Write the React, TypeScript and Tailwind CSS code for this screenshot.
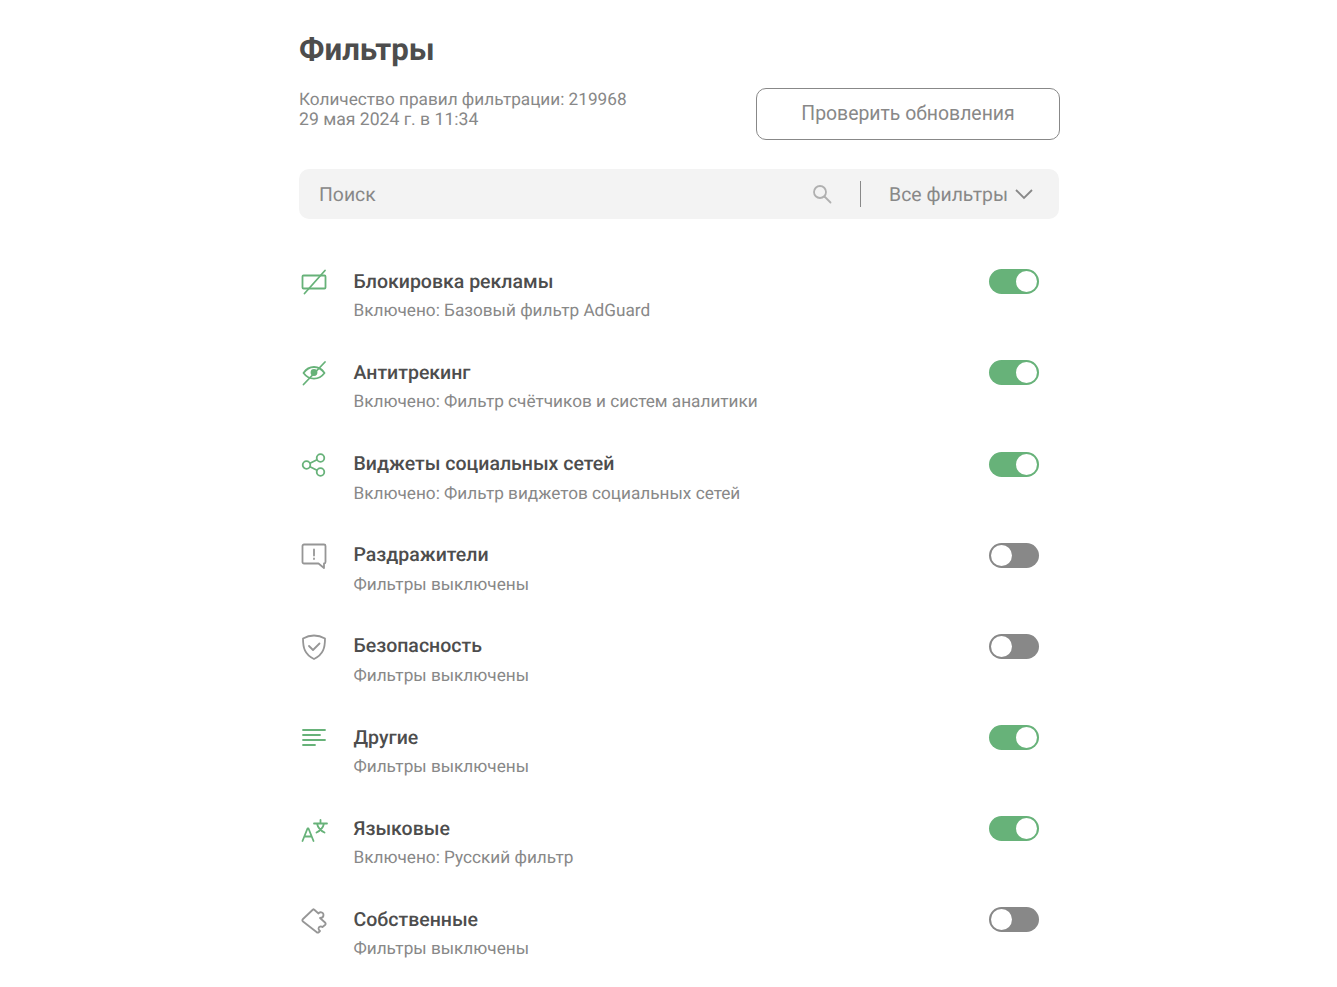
const GREEN = "#67b279";
const GRAY = "#969696";

function AdIcon({ color }: { color: string }) {
  return (
    <svg viewBox="0 0 28 28" fill="none" stroke={color} strokeWidth="1.800" strokeLinecap="round" strokeLinejoin="round" className="h-7 w-7">
      <rect x="2.500" y="7.500" width="23" height="13" rx="1" />
      <path d="M25 2.500 4.500 25.500" />
    </svg>
  );
}

function EyeIcon({ color }: { color: string }) {
  return (
    <svg viewBox="0 0 28 28" fill="none" stroke={color} strokeWidth="1.800" strokeLinecap="round" strokeLinejoin="round" className="h-7 w-7">
      <path d="M3.500 14c5.500-8 15.500-8 21 0-5.500 7.500-15.500 7.500-21 0Z" />
      <circle cx="14" cy="13.500" r="2.500" fill={color} />
      <path d="M25 3 3.500 25.500" />
    </svg>
  );
}

function ShareIcon({ color }: { color: string }) {
  return (
    <svg viewBox="0 0 28 28" fill="none" stroke={color} strokeWidth="1.800" className="h-7 w-7">
      <circle cx="6.500" cy="14" r="3.800" />
      <circle cx="20.500" cy="7" r="3.800" />
      <circle cx="20.500" cy="21" r="3.800" />
      <path d="M10 12.300 17 8.800M10 15.700l7 3.500" />
    </svg>
  );
}

function BubbleIcon({ color }: { color: string }) {
  return (
    <svg viewBox="0 0 28 28" fill="none" stroke={color} strokeWidth="1.800" strokeLinecap="round" strokeLinejoin="round" className="h-7 w-7">
      <path d="M4 2.500h20a1.500 1.500 0 0 1 1.500 1.500v16a1.500 1.500 0 0 1-1.500 1.500v4.500l-5.500-4.500H4A1.500 1.500 0 0 1 2.500 20V4A1.500 1.500 0 0 1 4 2.500Z" />
      <path d="M14 7.500v6M14 16.500v.5" />
    </svg>
  );
}

function ShieldIcon({ color }: { color: string }) {
  return (
    <svg viewBox="0 0 28 28" fill="none" stroke={color} strokeWidth="1.800" strokeLinecap="round" strokeLinejoin="round" className="h-7 w-7">
      <path d="M14 2.500c-3.500 0-7.500 1-11 3 0 9 1.500 16 11 20.500 9.500-4.500 11-11.500 11-20.500-3.500-2-7.500-3-11-3Z" />
      <path d="m9 13 4 4 6.500-6.500" />
    </svg>
  );
}

function LinesIcon({ color }: { color: string }) {
  return (
    <svg viewBox="0 0 28 28" fill="none" stroke={color} strokeWidth="1.800" strokeLinecap="round" className="h-7 w-7">
      <path d="M3 6h22M3 11h17M3 16h22M3 21h12" />
    </svg>
  );
}

function LangIcon({ color }: { color: string }) {
  return (
    <svg viewBox="0 0 28 28" fill="none" stroke={color} strokeWidth="1.800" strokeLinecap="round" strokeLinejoin="round" className="h-7 w-7">
      <path d="m2.500 26 5-12.500h1l5 12.500M4.500 21.500h7" />
      <path d="M14 8.500h13M20.500 5v3.500M17 8.500c.8 4 3.500 7 7.500 9M24 8.500c-.8 4-3.500 7-7.500 9" />
    </svg>
  );
}

function PuzzleIcon({ color }: { color: string }) {
  return (
    <svg viewBox="0 0 28 28" fill="none" stroke={color} strokeWidth="1.800" strokeLinejoin="round" className="h-7 w-7">
      <path d="M14 3.500 18.500 7.500c1-2 5-1.500 5 1.500 0 2-1.500 3-3.500 3l5 4.500c1 1 1 1.500 0 2.500l-2.500 2c-1.500-1-4-.5-4 1.500 0 1.500 1 2 1.500 2.500l-1 1c-1 1-1.500 1-2.500 0L3 15.500c-1-1-1-1.500 0-2.500L13 3.500c.3-.3.7-.3 1 0Z" />
    </svg>
  );
}

const filters = [
  { Icon: AdIcon, title: "Блокировка рекламы", sub: "Включено: Базовый фильтр AdGuard", on: true, color: GREEN },
  { Icon: EyeIcon, title: "Антитрекинг", sub: "Включено: Фильтр счётчиков и систем аналитики", on: true, color: GREEN },
  { Icon: ShareIcon, title: "Виджеты социальных сетей", sub: "Включено: Фильтр виджетов социальных сетей", on: true, color: GREEN },
  { Icon: BubbleIcon, title: "Раздражители", sub: "Фильтры выключены", on: false, color: GRAY },
  { Icon: ShieldIcon, title: "Безопасность", sub: "Фильтры выключены", on: false, color: GRAY },
  { Icon: LinesIcon, title: "Другие", sub: "Фильтры выключены", on: true, color: GREEN },
  { Icon: LangIcon, title: "Языковые", sub: "Включено: Русский фильтр", on: true, color: GREEN },
  { Icon: PuzzleIcon, title: "Собственные", sub: "Фильтры выключены", on: false, color: GRAY },
];

function Toggle({ on }: { on: boolean }) {
  return (
    <div className={`mt-[3px] flex h-[25px] w-[50px] items-center rounded-full px-[2px] ${on ? "justify-end bg-[#67b279]" : "justify-start bg-[#888888]"}`}>
      <div className="h-[21px] w-[21px] rounded-full bg-white" />
    </div>
  );
}

export default function App() {
  return (
    <div className="min-h-[987px] bg-white font-['Roboto',sans-serif] [text-rendering:geometricPrecision]">
      <div className="ml-[299px] w-[761px] pt-[32px]">
        <h1 className="text-[31.2px] leading-[36px] font-bold text-[#4d4d4d]">Фильтры</h1>

        <div className="mt-[20px] flex items-start justify-between">
          <div className="pt-[2px] text-[17.2px] leading-[20px] text-[#888888]">
            <div>Количество правил фильтрации: 219968</div>
            <div className="text-[17.6px]">29 мая 2024 г. в 11:34</div>
          </div>
          <button className="h-[52px] w-[304px] rounded-[10px] border border-[#888888] text-[19.4px] text-[#888888]">
            Проверить обновления
          </button>
        </div>

        <div className="mt-[29px] flex h-[50px] w-[760px] items-center rounded-[10px] bg-[#f3f3f3] pl-[20px] pr-[26px] text-[19.4px] text-[#888888]">
          <span className="flex-1 pt-[1px]">Поиск</span>
          <svg viewBox="0 0 20 20" fill="none" stroke="#b0b0b0" strokeWidth="1.800" strokeLinecap="round" className="h-5 w-5">
            <circle cx="8" cy="8" r="6" />
            <path d="m12.500 12.500 6 6" />
          </svg>
          <div className="mx-[28px] h-[26px] w-px bg-[#888888]" />
          <span className="pt-[1px]">Все фильтры</span>
          <svg viewBox="0 0 18 12" fill="none" stroke="#888888" strokeWidth="1.800" className="ml-[7px] h-[12px] w-[18px]">
            <path d="m1 2 8 8 8-8" />
          </svg>
        </div>

        <div className="mt-[39.3px] w-[760px]">
          {filters.map(({ Icon, title, sub, on, color }) => (
            <div key={title} className="flex h-[91.15px] items-start pr-[20px] pt-[8px]">
              <div className="mr-[40.5px] w-[14px] shrink-0 pl-[1px] pt-[2px]">
                <div className="w-7">
                  <Icon color={color} />
                </div>
              </div>
              <div className="flex-1">
                <div className="pt-[0.5px] text-[19.5px] leading-[30px] font-medium text-[#4d4d4d]">{title}</div>
                <div className="mt-[-0.5px] text-[17.2px] leading-[30px] text-[#888888]">{sub}</div>
              </div>
              <Toggle on={on} />
            </div>
          ))}
        </div>
      </div>
    </div>
  );
}
